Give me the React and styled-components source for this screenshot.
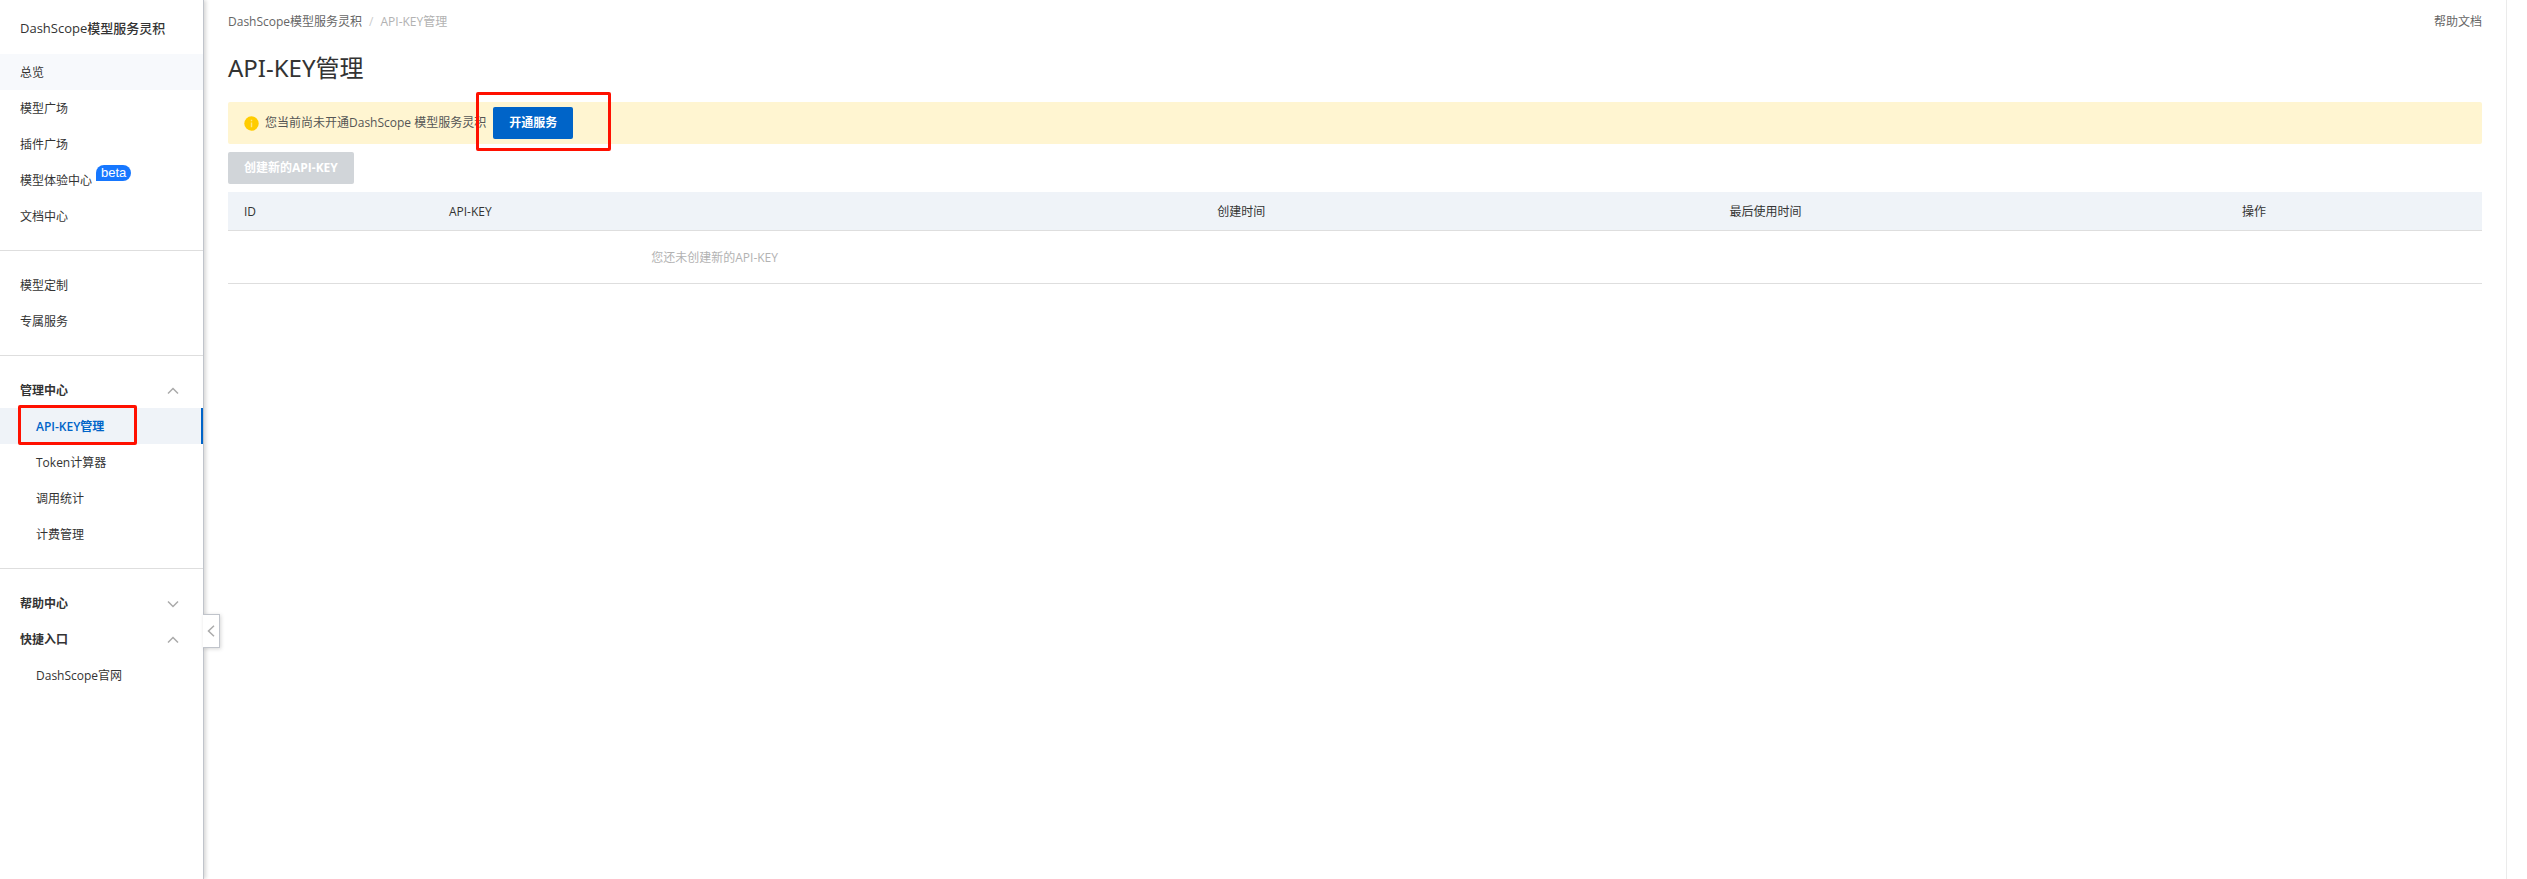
import React from "react";
import styled, { createGlobalStyle, css } from "styled-components";

const GlobalStyle = createGlobalStyle`
  *, *::before, *::after { box-sizing: border-box; }
  body {
    margin: 0;
    background: #fff;
    color: #333;
    font-family: "Open Sans", "Noto Sans CJK SC", sans-serif;
    font-size: 12px;
    line-height: 20px;
  }
  a { color: inherit; text-decoration: none; }
  button { font: inherit; cursor: pointer; }
  ul, ol { list-style: none; margin: 0; padding: 0; }
`;

const Page = styled.div`
  display: flex;
  min-height: 100vh;
`;

const Sidebar = styled.aside`
  position: relative;
  z-index: 1;
  flex: none;
  width: 204px;
  border-right: 1px solid #c0c4cb;
  box-shadow: 2px 0 4px rgba(0, 0, 0, 0.16);
  background: #fff;
`;

const Brand = styled.div`
  padding: 16px 20px 14px;
  font-size: 13px;
  line-height: 24px;
  font-weight: 500;
`;

const NavList = styled.ul`
  & + & {
    margin-top: 16px;
    border-top: 1px solid #dedede;
    padding-top: 16px;
  }
`;

const NavEntry = styled.li`
  position: relative;
`;

const rowStyle = css`
  display: flex;
  align-items: center;
  width: 100%;
  height: 36px;
  border: 0;
  padding: 1px 24px 0 20px;
  background: transparent;
  color: #333;
`;

const NavLink = styled.a`
  ${rowStyle}
  ${(p) => p.$nested && css`padding-left: 36px;`}
  ${(p) => p.$hovered && css`background: #f7f9fc;`}
  ${(p) =>
    p.$active &&
    css`
      background: #eff3f8;
      border-right: 2px solid #0064c8;
      color: #0064c8;
      font-weight: 600;
    `}
`;

const GroupButton = styled.button`
  ${rowStyle}
  justify-content: space-between;
  font-weight: 700;
`;

const Beta = styled.span`
  align-self: flex-start;
  margin: 2px 0 0 4px;
  height: 16px;
  padding: 0 5px;
  border-radius: 8px 8px 8px 0;
  background: #1677ff;
  color: #fff;
  font-family: "Liberation Sans", sans-serif;
  font-size: 13px;
  line-height: 16px;
`;

const CollapseButton = styled.button`
  position: absolute;
  top: 614px;
  left: 100%;
  display: flex;
  align-items: center;
  justify-content: center;
  width: 17px;
  height: 34px;
  border: 1px solid #c0c4cb;
  border-left: 0;
  padding: 0;
  background: #fff;
  box-shadow: 1px 1px 4px rgba(0, 0, 0, 0.16);
`;

const Highlight = styled.span`
  position: absolute;
  border: 3px solid #ff1000;
  border-radius: 2px;
  pointer-events: none;
`;

const NavHighlight = styled(Highlight)`
  top: -3px;
  bottom: -1px;
  left: 18px;
  width: 119px;
`;

const ButtonHighlight = styled(Highlight)`
  inset: -15px -38px -12px -17px;
`;

const Main = styled.main`
  flex: 1;
  min-width: 0;
  padding: 10px 24px;
`;

const Rail = styled.div`
  flex: none;
  width: 21px;
  border-left: 1px solid #ebebeb;
`;

const TopBar = styled.div`
  display: flex;
  justify-content: space-between;
  height: 24px;
  line-height: 24px;
  color: #666;
`;

const Crumbs = styled.ol`
  display: flex;
`;

const Crumb = styled.li`
  & + & { color: #b2b2b2; }
  & + &::before {
    content: "/";
    margin: 0 7px;
    color: #ccc;
  }
`;

const Title = styled.h1`
  margin: 16px 0;
  font-family: "Noto Sans", "Noto Sans CJK SC", sans-serif;
  font-size: 24px;
  line-height: 36px;
  font-weight: 400;
`;

const Notice = styled.div`
  display: flex;
  align-items: center;
  height: 42px;
  padding: 0 16px;
  border-radius: 2px;
  background: #fff5d1;
  color: #555;
`;

const NoticeText = styled.span`
  margin: 0 7px 0 6px;
`;

const ActionWrap = styled.span`
  position: relative;
  display: flex;
`;

const Button = styled.button`
  height: 32px;
  border: 0;
  border-radius: 2px;
  padding: 0 16px;
  background: #0064c8;
  color: #fff;
  font-weight: 700;
  &:disabled { background: #d1d5d9; cursor: not-allowed; }
`;

const Toolbar = styled.div`
  display: flex;
  padding: 8px 0;
`;

const Table = styled.table`
  width: 100%;
  table-layout: fixed;
  border-collapse: separate;
  border-spacing: 0;
`;

const Col = styled.col`
  width: ${(p) => p.$share}%;
`;

const HeadCell = styled.th`
  height: 39px;
  padding: 2px 16px 0;
  border-bottom: 1px solid #dedede;
  background: #eff3f8;
  font-weight: 400;
  text-align: left;
`;

const Cell = styled.td`
  height: 53px;
  padding: 1px 0 0;
  border-bottom: 1px solid #dedede;
  color: #b2b2b2;
  text-align: center;
`;

const paths = {
  up: "M1 6.5 L6 1.5 L11 6.5",
  down: "M1 1.5 L6 6.5 L11 1.5",
};

const Chevron = ({ dir }) => (
  <svg width="12" height="8" viewBox="0 0 12 8" fill="none" stroke="#aaa" strokeWidth="1.5" aria-hidden="true">
    <path d={paths[dir]} />
  </svg>
);

const InfoIcon = () => (
  <svg width="15" height="15" viewBox="0 0 15 15" aria-hidden="true">
    <circle cx="7.5" cy="7.5" r="7.2" fill="#fc0" />
    <path d="M6.8 3.8h1.4v1.4H6.8zM6.8 6.5h1.4v4.7H6.8z" fill="#fff" opacity=".5" />
  </svg>
);

const columns = [
  ["ID", 9.09],
  ["API-KEY", 34.09],
  ["创建时间", 22.73],
  ["最后使用时间", 22.73],
  ["操作", 11.36],
];

const Item = ({ children, marked, ...rest }) => (
  <NavEntry>
    <NavLink href="#" {...rest}>{children}</NavLink>
    {marked && <NavHighlight />}
  </NavEntry>
);

const Group = ({ label, open }) => (
  <NavEntry>
    <GroupButton type="button" aria-expanded={open}>
      {label}
      <Chevron dir={open ? "up" : "down"} />
    </GroupButton>
  </NavEntry>
);

export default function App() {
  return (
    <Page>
      <GlobalStyle />
      <Sidebar>
        <Brand>DashScope模型服务灵积</Brand>
        <nav>
          <NavList>
            <Item $hovered>总览</Item>
            <Item>模型广场</Item>
            <Item>插件广场</Item>
            <Item>模型体验中心<Beta>beta</Beta></Item>
            <Item>文档中心</Item>
          </NavList>
          <NavList>
            <Item>模型定制</Item>
            <Item>专属服务</Item>
          </NavList>
          <NavList>
            <Group label="管理中心" open />
            <Item $nested $active marked aria-current="page">API-KEY管理</Item>
            <Item $nested>Token计算器</Item>
            <Item $nested>调用统计</Item>
            <Item $nested>计费管理</Item>
          </NavList>
          <NavList>
            <Group label="帮助中心" open={false} />
            <Group label="快捷入口" open />
            <Item $nested>DashScope官网</Item>
          </NavList>
        </nav>
        <CollapseButton type="button" aria-label="收起">
          <svg width="8" height="12" viewBox="0 0 8 12" fill="none" stroke="#aaa" strokeWidth="1.5" aria-hidden="true">
            <path d="M7 0.8 L1.5 6 L7 11.2" />
          </svg>
        </CollapseButton>
      </Sidebar>
      <Main>
        <TopBar>
          <Crumbs>
            <Crumb><a href="#">DashScope模型服务灵积</a></Crumb>
            <Crumb>API-KEY管理</Crumb>
          </Crumbs>
          <a href="#">帮助文档</a>
        </TopBar>
        <Title>API-KEY管理</Title>
        <Notice role="alert">
          <InfoIcon />
          <NoticeText>您当前尚未开通DashScope 模型服务灵积</NoticeText>
          <ActionWrap>
            <Button type="button">开通服务</Button>
            <ButtonHighlight />
          </ActionWrap>
        </Notice>
        <Toolbar>
          <Button type="button" disabled>创建新的API-KEY</Button>
        </Toolbar>
        <Table>
          <colgroup>
            {columns.map(([name, share]) => <Col key={name} $share={share} />)}
          </colgroup>
          <thead>
            <tr>{columns.map(([name]) => <HeadCell key={name} scope="col">{name}</HeadCell>)}</tr>
          </thead>
          <tbody>
            <tr>
              <Cell colSpan={2}>您还未创建新的API-KEY</Cell>
              <Cell colSpan={3} />
            </tr>
          </tbody>
        </Table>
      </Main>
      <Rail />
    </Page>
  );
}
